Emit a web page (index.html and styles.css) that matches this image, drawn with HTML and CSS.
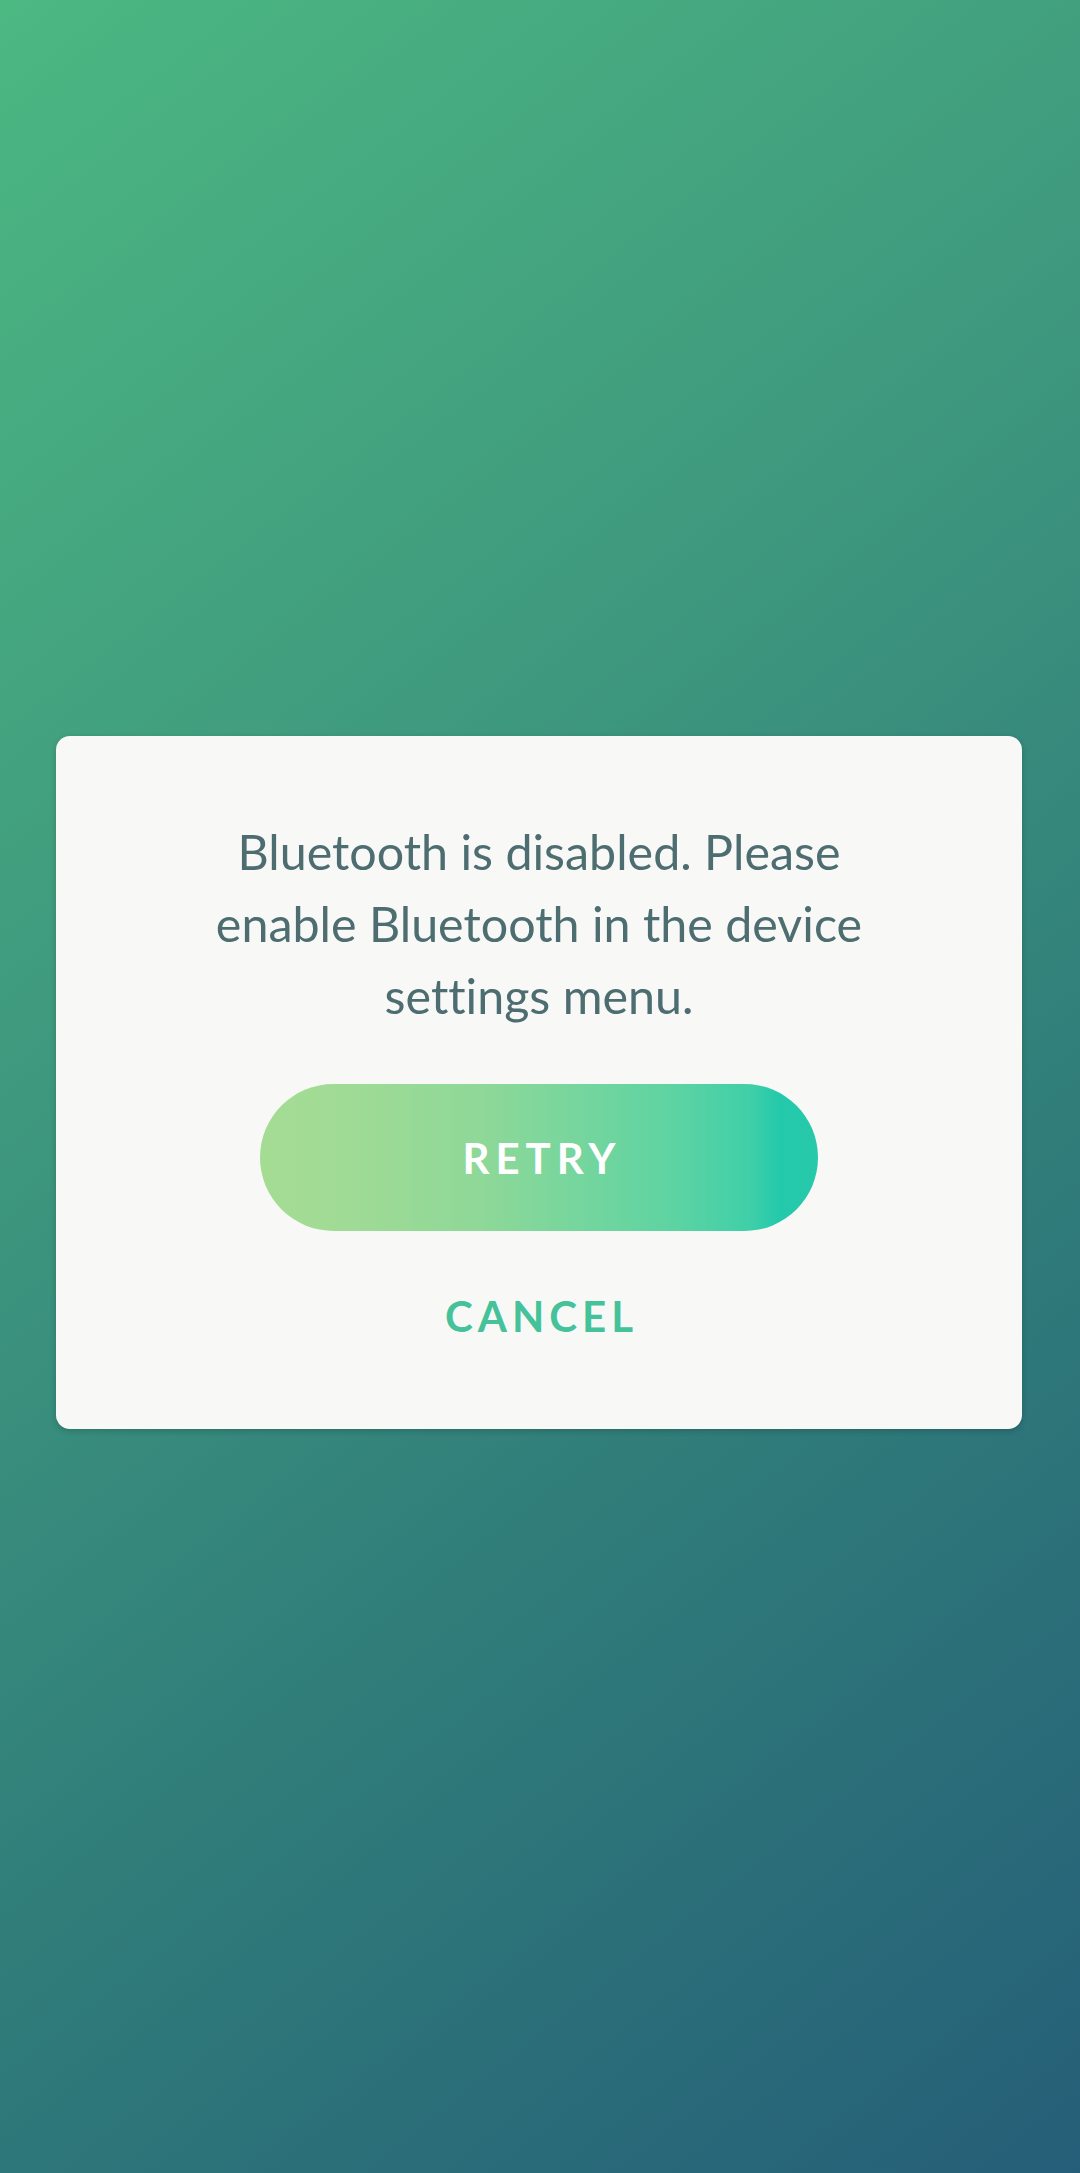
FILE: index.html
```html
<!DOCTYPE html>
<html lang="en">
<head>
<meta charset="utf-8">
<title>Bluetooth disabled</title>
<link rel="stylesheet" href="styles.css">
</head>
<body>
<div class="screen">
  <div class="dialog">
    <p class="message">Bluetooth is disabled. Please enable Bluetooth in the device settings menu.</p>
    <button class="retry" type="button">RETRY</button>
    <button class="cancel" type="button">CANCEL</button>
  </div>
</div>
</body>
</html>
```

FILE: styles.css
```css
html, body {
  margin: 0;
  padding: 0;
}
body {
  font-family: Lato, "Open Sans", sans-serif;
  font-variant-ligatures: none;
}
.screen {
  width: 1080px;
  height: 2173px;
  box-sizing: border-box;
  padding: 0 58px 8px 56px;
  display: flex;
  flex-direction: column;
  justify-content: center;
  background: linear-gradient(142deg, #4cb882 0%, #3f9a7e 35%, #307d7a 65%, #255e78 100%);
}
.dialog {
  height: 693px;
  box-sizing: border-box;
  padding: 79px 60px 0;
  background: #f8f9f7;
  border-radius: 14px;
  box-shadow: 0 2px 6px rgba(0, 0, 0, 0.18);
  display: flex;
  flex-direction: column;
  align-items: center;
}
.message {
  margin: 0;
  width: 700px;
  font-size: 48.4px;
  line-height: 72px;
  color: #4d6d71;
  text-align: center;
  font-variant-ligatures: none;
}
.retry {
  margin-top: 53px;
  width: 558px;
  height: 147px;
  border: none;
  border-radius: 74px;
  background: linear-gradient(90deg, #a5dc94 0%, #a0db95 15%, #8ed898 40%, #5cd3a3 75%, #3fcfa8 88%, #24c9ab 93%, #26c9aa 100%);
  color: #ffffff;
  font-family: Lato, sans-serif;
  font-weight: 700;
  font-size: 42px;
  letter-spacing: 6px;
  padding: 0 0 0 6px;
}
.cancel {
  margin-top: 55px;
  height: 60px;
  border: none;
  background: none;
  color: #46c29b;
  font-family: Lato, sans-serif;
  font-weight: 700;
  font-size: 42px;
  line-height: 60px;
  letter-spacing: 5px;
  padding: 0 0 0 5px;
}
```
